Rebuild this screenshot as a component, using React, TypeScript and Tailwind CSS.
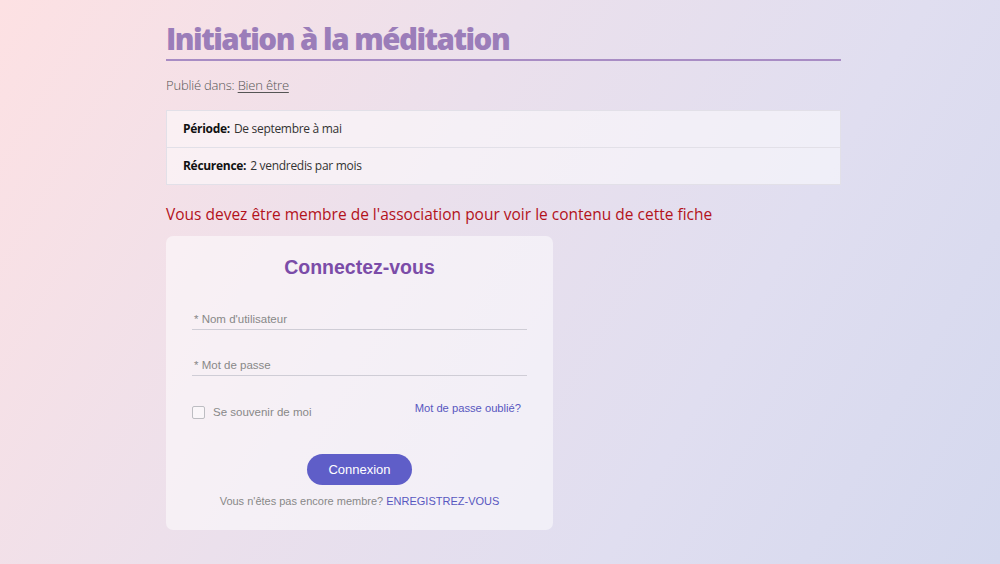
import React from "react";

export default function App() {
  return (
    <div className="min-h-[564px] w-full bg-[linear-gradient(120deg,#fde1e3_0%,#ebe0ec_40%,#e0def0_70%,#d4d8ee_100%)] font-['Open_Sans',sans-serif]">
      <div className="ml-[166px] w-[675px] pt-[20px] pb-[34px]">
        <h1 className="text-[29.5px] leading-[37px] font-extrabold text-[#9b7db9] tracking-[-1.5px]">
          Initiation à la méditation
        </h1>
        <div className="mt-[2px] h-[2px] bg-[#a88cc4]" />
        <p className="mt-[15px] text-[13px] leading-[18px] font-light text-[#555] tracking-[-0.2px]">
          Publié dans: <span className="underline underline-offset-2">Bien être</span>
        </p>
        <div className="mt-[16px] border border-[#e2e0e8] bg-white/50 text-[12px] text-[#333] tracking-[-0.3px]">
          <div className="h-[37px] flex items-center px-[16px] border-b border-[#e2e0e8]">
            <span className="font-bold text-[#111] mr-[4px]">Période:</span>De septembre à mai
          </div>
          <div className="h-[36px] flex items-center px-[16px]">
            <span className="font-bold text-[#111] mr-[4px]">Récurence:</span>2 vendredis par mois
          </div>
        </div>
        <p className="mt-[18px] text-[15.5px] leading-[22px] text-[#b3121b]">
          Vous devez être membre de l'association pour voir le contenu de cette fiche
        </p>
        <div className="mt-[11px] w-[387px] h-[294px] rounded-[7px] bg-white/50 font-['Liberation_Sans',sans-serif] px-[26px] pt-[18px]">
          <h2 className="text-center text-[19.5px] leading-[26px] font-bold text-[#7b4ca8]">Connectez-vous</h2>
          <div className="mt-[32px] border-b border-[#cfcdd6] pb-[3px] text-[11.5px] leading-[14px] text-[#888] px-[2px]">
            * Nom d'utilisateur
          </div>
          <div className="mt-[28px] border-b border-[#cfcdd6] pb-[3px] text-[11.5px] leading-[14px] text-[#888] px-[2px]">
            * Mot de passe
          </div>
          <div className="mt-[24px] flex items-start justify-between pr-[6px]">
            <label className="flex items-center gap-[8px] mt-[4px]">
              <span className="w-[13px] h-[13px] border border-[#bdbdc2] rounded-[2px] bg-white/40" />
              <span className="text-[11.5px] text-[#888]">Se souvenir de moi</span>
            </label>
            <a className="text-[11.2px] text-[#5857c0]">Mot de passe oublié?</a>
          </div>
          <div className="mt-[33px] flex justify-center">
            <button className="w-[105px] h-[31px] rounded-full bg-[#5f5ec8] text-white text-[13px]">Connexion</button>
          </div>
          <p className="mt-[8px] text-center text-[11px] text-[#888]">
            Vous n'êtes pas encore membre? <span className="text-[#5857c0]">ENREGISTREZ-VOUS</span>
          </p>
        </div>
      </div>
    </div>
  );
}
